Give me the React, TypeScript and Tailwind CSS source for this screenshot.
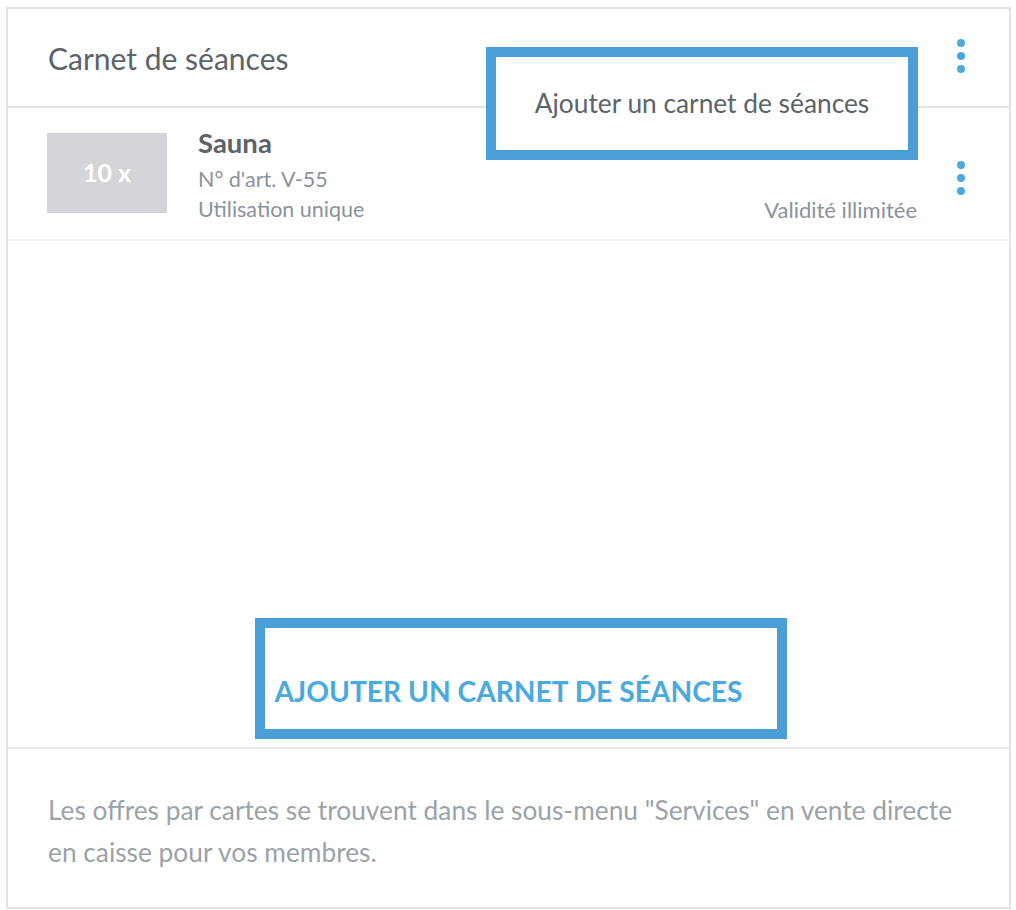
import React from "react";

const Kebab = () => (
  <div className="flex flex-col items-center gap-[5px]">
    <span className="block w-[8px] h-[8px] rounded-full bg-[#4aaae0]" />
    <span className="block w-[8px] h-[8px] rounded-full bg-[#4aaae0]" />
    <span className="block w-[8px] h-[8px] rounded-full bg-[#4aaae0]" />
  </div>
);

export default function App() {
  return (
    <div
      className="relative w-[1016px] h-[910px] bg-white"
      style={{ fontFamily: "Lato, 'Open Sans', sans-serif" }}
    >
      <div className="absolute left-[6px] top-[7px] w-[1005px] h-[902px] border-2 border-[#e0e4e7] flex flex-col">
        {/* header */}
        <div className="h-[99px] flex items-center justify-between pl-[40px] pr-[40px] border-b-2 border-[#e0e4e7] shrink-0">
          <span className="text-[30px] text-[#5b6469] leading-none">Carnet de séances</span>
          <div className="-mt-[4px] mr-[4px]">
            <Kebab />
          </div>
        </div>
        {/* row */}
        <div className="h-[133px] flex items-start pl-[39px] pr-[40px] pt-[25px] border-b-2 border-[#eef0f2] shrink-0">
          <div className="w-[120px] h-[80px] bg-[#d4d5d9] flex items-center justify-center shrink-0">
            <span className="text-white font-bold text-[25px]">10 x</span>
          </div>
          <div className="ml-[31px] flex flex-col -mt-[6px]">
            <span className="text-[27.5px] font-bold text-[#5b6469] leading-[32px]">Sauna</span>
            <span className="text-[21.5px] text-[#8a9399] leading-[30px] mt-[5px]">N° d'art. V-55</span>
            <span className="text-[21.5px] text-[#8a9399] leading-[30px]">Utilisation unique</span>
          </div>
          <div className="ml-auto flex items-end gap-[40px] self-stretch pb-[14px]">
            <span className="text-[22px] text-[#8a9399] leading-[30px]">Validité illimitée</span>
            <div className="self-start mt-[28px] mr-[4px]">
              <Kebab />
            </div>
          </div>
        </div>
        {/* body */}
        <div className="flex-1 flex items-end justify-center pb-[42px] border-b-2 border-[#e8ebed]">
          <span className="text-[28.2px] font-bold text-[#4aaae0] leading-none">
            AJOUTER UN CARNET DE SÉANCES
          </span>
        </div>
        {/* footer */}
        <div className="h-[158px] shrink-0 pl-[40px] pr-[30px] pt-[40px]">
          <p className="text-[26.3px] text-[#9aa3a8] leading-[42px] max-w-[925px]">
            Les offres par cartes se trouvent dans le sous-menu "Services" en vente directe en caisse pour vos membres.
          </p>
        </div>
      </div>

      {/* dropdown menu annotation */}
      <div className="absolute left-[486px] top-[47px] w-[432px] h-[113px] border-[10px] border-[#4a9fd6] bg-white flex items-center justify-center">
        <span className="text-[26.3px] text-[#5b6469]">Ajouter un carnet de séances</span>
      </div>

      {/* button annotation */}
      <div className="absolute left-[255px] top-[618px] w-[532px] h-[121px] border-[10px] border-[#4a9fd6]" />
    </div>
  );
}
